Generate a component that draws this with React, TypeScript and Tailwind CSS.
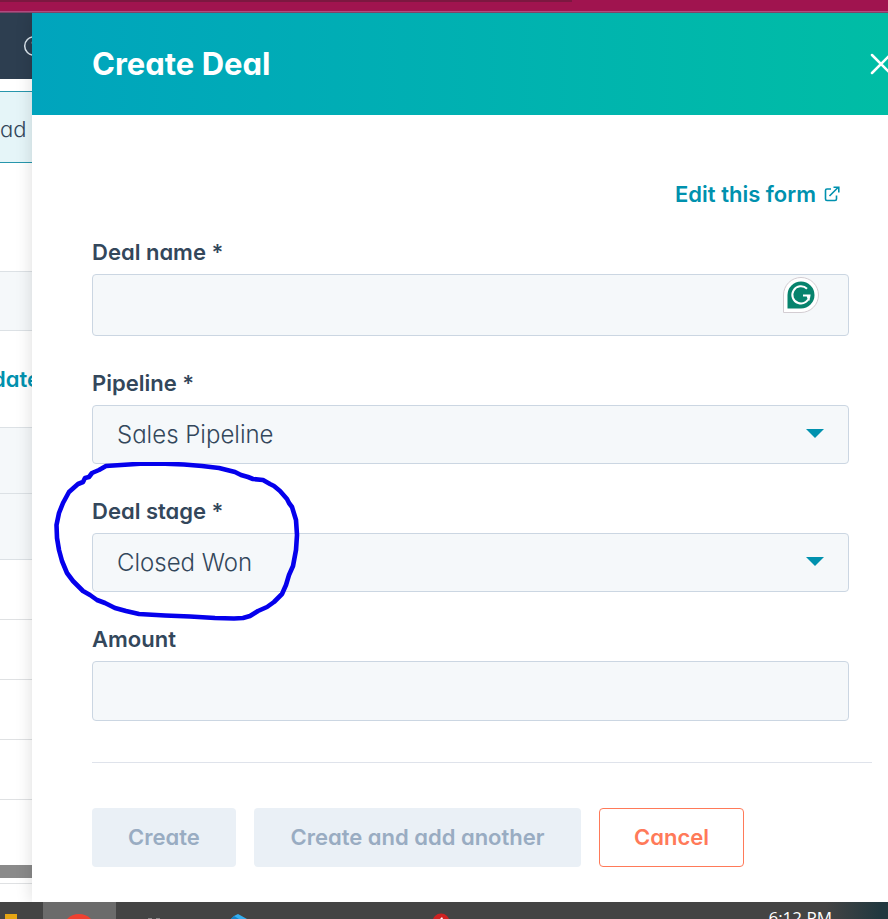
import type { ReactNode } from "react";

function BackgroundPage() {
  return (
    <aside className="flex w-8 shrink-0 flex-col overflow-hidden bg-white">
      <div className="flex h-[66px] shrink-0 items-center bg-[#2d3e50] pl-6">
        <svg className="size-5 shrink-0 overflow-visible" viewBox="0 0 20 20" fill="none" stroke="#dbe4ec" strokeWidth="1.5">
          <circle cx="10" cy="10" r="9.3" />
          <path d="M8 7.500a3 3 0 1 1 4 3l-1 1v1" strokeOpacity="0.5" />
        </svg>
      </div>
      <div className="mt-3 flex h-[72px] shrink-0 items-center border-y border-[#2796ac] bg-[#e5f5f8] text-[22px] font-light">
        <span className="pt-1">ad</span>
      </div>
      <div className="mt-[108px] h-[60px] shrink-0 border-y border-[#dce1e5] bg-[#f5f8fa]" />
      <div className="flex h-24 shrink-0 items-center justify-center text-[22px] font-semibold text-[#0091ae]">date</div>
      <div className="h-[66px] shrink-0 border-t border-[#dce1e5] bg-[#f5f8fa]" />
      <div className="h-[67px] shrink-0 border-y border-[#dce1e5] bg-[#f5f8fa]" />
      <div className="h-[60px] shrink-0 border-b border-[#dfe1e3]" />
      <div className="h-[60px] shrink-0 border-b border-[#dfe1e3]" />
      <div className="h-[60px] shrink-0 border-b border-[#dfe1e3]" />
      <div className="h-[60px] shrink-0 border-b border-[#dfe1e3]" />
      <div className="mt-[65px] h-[13px] shrink-0 bg-[#8a8a8a]" />
      <div className="mt-[5px] h-px shrink-0 bg-[#dfe1e3]" />
    </aside>
  );
}

function Field({ id, label, children }: { id: string; label: string; children: ReactNode }) {
  return (
    <div className="relative mb-[35px] mr-[23px] flex flex-col gap-[10px]">
      <label htmlFor={id} className="text-[22px] leading-6 font-semibold">
        {label}
      </label>
      {children}
    </div>
  );
}

function Picker({ id, value }: { id: string; value: string }) {
  return (
    <div className="relative">
      <select
        id={id}
        className="block h-[59px] w-full appearance-none rounded border border-[#cbd6e2] bg-[#f5f8fa] px-6 text-2xl font-light outline-none"
      >
        <option>{value}</option>
      </select>
      <svg className="pointer-events-none absolute top-6 right-[25px] h-[9px] w-[18px]" viewBox="0 0 18 9">
        <path d="M0 0h18L9 9z" fill="#0091ae" />
      </svg>
    </div>
  );
}

function GrammarBadge() {
  return (
    <svg className="absolute top-[37px] right-[30px] size-9" viewBox="0 0 36 36" fill="none">
      <path d="M.5 35.500V18A17.500 17.500 0 1 1 18 35.500z" fill="#fff" stroke="#d3cdd2" />
      <path d="M4.500 31.500V18A13.500 13.500 0 1 1 18 31.500z" fill="#07836d" />
      <path d="M24 11.800A8.600 8.600 0 1 0 26.500 18.500H20M24.500 18.500l1.500 5" stroke="#fff" strokeWidth="2" />
    </svg>
  );
}

function PenCircle() {
  return (
    <svg
      className="pointer-events-none absolute -top-[37px] -left-[38px] h-[160px] w-[248px]"
      viewBox="54 462 248 160"
      fill="none"
      stroke="#0500ec"
      strokeWidth="4.600"
      strokeLinecap="round"
      strokeLinejoin="round"
    >
      <path d="M106 466L99 470L92 473L89 477L85 478L83 482L78 484L69 492L63 503L59 513L56.500 525L57 538L59 550L62 561L67 573L73 581L83 591L90 595L97 600L105 603L115 608L126 611L139 614L165 615.500L190 616.500L215 618L234 618.500L243 618L250 616L258 611L267 607L274 602L282 594L286 585L289 575L293 566L296 550L297 535L296 520L292 507L289 503L287 499L280 491L274 486L270 484L263 480L253 479L248 477L241 475L235 472L219 468L202 466L184 464.500L165 463.800L140 463.800L125 464.800Z" />
    </svg>
  );
}

function Taskbar() {
  return (
    <footer className="flex h-[17px] shrink-0 items-start overflow-hidden bg-[linear-gradient(to_right,#444_0%,#444_93%,#22383f_99%)]">
      <div className="w-[43px] shrink-0">
        <svg className="h-[17px] w-[43px]" viewBox="0 0 43 17">
          <path d="M5 12h12v5H5z" fill="#e5a514" />
        </svg>
      </div>
      <div className="h-[17px] w-[73px] shrink-0 bg-[#6b6b6b]">
        <svg className="h-[17px] w-[73px]" viewBox="0 0 73 17">
          <circle cx="36" cy="29" r="17" fill="#ef4030" />
        </svg>
      </div>
      <svg className="h-[17px] w-[340px] shrink-0" viewBox="116 0 340 17">
        <path d="M148 16h4v1h-4zM156 16h4v1h-4z" fill="#888" />
        <path d="M231 17l3-3 4-2 9 5z" fill="#35aef0" />
        <path d="M231 17l3-3 5 3z" fill="#1482c8" />
        <circle cx="441" cy="20" r="8.500" fill="#cf2222" />
        <path d="M440 17l2-2 1 2z" fill="#fff" />
      </svg>
      <time className="mt-1 ml-auto mr-14 shrink-0 font-['Open_Sans',sans-serif] text-[17px] leading-6 text-white">6:12 PM</time>
    </footer>
  );
}

const actionButton = "h-[59px] rounded text-[22px] font-semibold";

export default function App() {
  return (
    <div className="flex h-screen min-h-[600px] flex-col overflow-hidden bg-white font-['Inter',sans-serif] text-[#33475b] [font-feature-settings:'cv11']">
      <div className="h-[13px] shrink-0 border-b border-[#7d4468] bg-[#a0144f]">
        <div className="h-[2px] w-[572px] bg-[#7b1840]" />
        <div className="mt-[9px] h-px bg-[#b04a80]" />
      </div>
      <div className="flex flex-1 overflow-hidden">
        <BackgroundPage />
        <main className="relative flex min-w-0 flex-1 flex-col bg-white shadow-[0_0_16px_rgba(0,0,0,0.14)]">
          <header className="flex h-[102px] shrink-0 items-center justify-between overflow-hidden bg-linear-to-r from-[#00a4bd] to-[#00bda5] pl-[60px] text-white">
            <h1 className="text-[31px] font-bold">Create Deal</h1>
            <button type="button" aria-label="Close" className="w-[18px]">
              <svg className="size-[22px] max-w-none" viewBox="0 0 22 22" fill="none" stroke="currentColor" strokeWidth="2.500" strokeLinecap="round">
                <path d="M2 2l18 18M20 2L2 20" />
              </svg>
            </button>
          </header>
          <form className="flex flex-col pt-[67px] pr-4 pl-[60px]" onSubmit={(e) => e.preventDefault()}>
            <a href="#edit" className="mr-8 mb-[34px] flex h-6 items-center gap-2 self-end text-[22px] leading-6 font-semibold text-[#0091ae]">
              Edit this form
              <svg className="size-4" viewBox="0 0 16 16" fill="none" stroke="currentColor" strokeWidth="1.600">
                <path d="M7 3H3Q1.500 3 1.500 4.500V13Q1.500 14.500 3 14.500H11Q12.500 14.500 12.500 13V9.500M5.500 10L14 1.500M9.500 1.200H14.800V6.500" />
              </svg>
            </a>
            <Field id="name" label="Deal name *">
              <input id="name" type="text" className="h-[62px] rounded border border-[#cbd6e2] bg-[#f5f8fa] px-6 text-2xl font-light outline-none" />
              <GrammarBadge />
            </Field>
            <Field id="pipeline" label="Pipeline *">
              <Picker id="pipeline" value="Sales Pipeline" />
            </Field>
            <Field id="stage" label="Deal stage *">
              <Picker id="stage" value="Closed Won" />
              <PenCircle />
            </Field>
            <Field id="amount" label="Amount">
              <input id="amount" type="text" className="h-[60px] rounded border border-[#cbd6e2] bg-[#f5f8fa] px-6 text-2xl font-light outline-none" />
            </Field>
            <hr className="mt-[6px] mb-[45px] border-[#dfe3eb]" />
            <div className="flex gap-[18px]">
              <button type="submit" disabled className={`${actionButton} w-[144px] bg-[#eaf0f6] text-[#99acc2]`}>
                Create
              </button>
              <button type="button" disabled className={`${actionButton} w-[327px] bg-[#eaf0f6] text-[#99acc2]`}>
                Create and add another
              </button>
              <button type="button" className={`${actionButton} w-[145px] border border-[#ff7a59] bg-white text-[#ff7a59]`}>
                Cancel
              </button>
            </div>
          </form>
        </main>
      </div>
      <Taskbar />
    </div>
  );
}
